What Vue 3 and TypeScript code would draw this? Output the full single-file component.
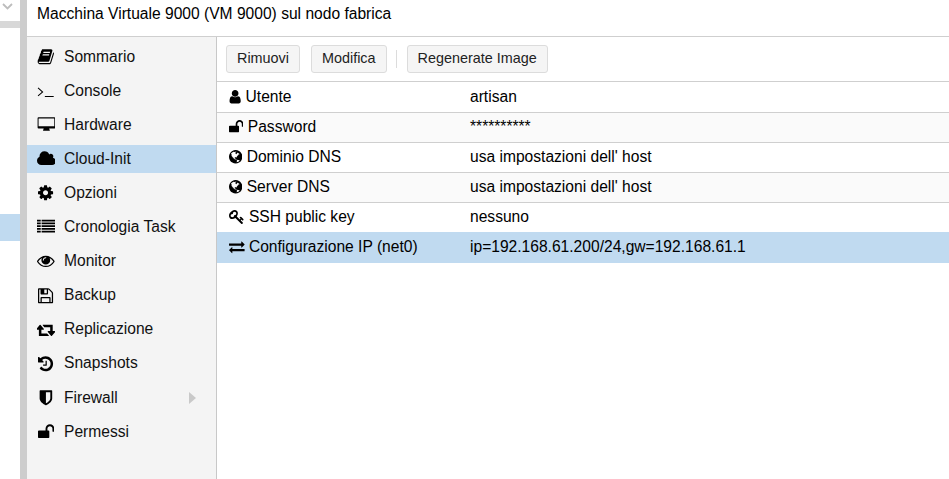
<script setup lang="ts">
const P: Record<string, { x: number; w: number; d: string }> = {
  book: { x: 0, w: 1792, d: 'M1703 478q40 57 18 129l-275 906q-19 64-76.5 107.5t-122.5 43.5h-923q-77 0-148.5-53.5t-99.5-131.5q-24-67-2-127 0-4 3-27t4-37q1-8-3-21.5t-3-19.5q2-11 8-21t16.5-23.5 16.5-23.5q23-38 45-91.5t30-91.5q3-10 .5-30t-.5-28q3-11 17-28t17-23q21-36 42-92t25-90q1-9-2.5-32t.5-28q4-13 22-30.5t22-22.5q19-26 42.5-84.5t27.5-96.5q1-8-3-25.5t-2-26.5q2-8 9-18t18-23 17-21q8-12 16.5-30.5t15-35 16-36 19.5-32 26.5-23.5 36-11.5 47.5 5.5l-1 3q38-9 51-9h761q74 0 114 56t18 130l-274 906q-36 119-71.5 153.5t-128.5 34.5h-869q-27 0-38 15-11 16-1 43 24 70 144 70h923q29 0 56-15.5t35-41.5l300-987q7-22 5-57 38 15 59 43zm-1064 2q-4 13 2 22.5t20 9.5h608q13 0 25.5-9.5t16.5-22.5l21-64q4-13-2-22.5t-20-9.5h-608q-13 0-25.5 9.5t-16.5 22.5zm-83 256q-4 13 2 22.5t20 9.5h608q13 0 25.5-9.5t16.5-22.5l21-64q4-13-2-22.5t-20-9.5h-608q-13 0-25.5 9.5t-16.5 22.5z' },
  terminal: { x: 0, w: 1792, d: 'M140 550l-70 76 420 380-420 380 70 76 510-456zM800 1430h900v110H800z' },
  desktop: { x: 0, w: 1920, d: 'M160 128h1600q100 0 100 100v940q0 100-100 100h-520q0 70 60 150 10 20 0 50t-50 32H670q-40-2-50-32t0-50q60-80 60-150H160q-100 0-100-100V228q0-100 100-100zm16 128q-16 0-16 16v760q0 16 16 16h1568q16 0 16-16V272q0-16-16-16z' },
  cloud: { x: 0, w: 1920, d: 'M1920 1152q0 159-112.5 271.5t-271.5 112.5h-1088q-185 0-316.5-131.5t-131.5-316.5q0-132 71-241.5t187-163.5q-2-28-2-43 0-212 150-362t362-150q158 0 286.5 88t187.5 230q70-62 166-62 106 0 181 75t75 181q0 75-41 138 129 30 213 134.5t84 239.5z' },
  cog: { x: 128, w: 1536, d: 'M1152 896q0-106-75-181t-181-75-181 75-75 181 75 181 181 75 181-75 75-181zm512-109v222q0 12-8 23t-20 13l-185 28q-19 54-39 91 35 50 107 138 10 12 10 25t-9 23q-27 37-99 108t-94 71q-12 0-26-9l-138-108q-44 23-91 38-16 136-29 186-7 28-36 28h-222q-14 0-24.5-8.5t-11.5-21.5l-28-184q-49-16-90-37l-141 107q-10 9-25 9-14 0-25-11-126-114-165-168-7-10-7-23 0-12 8-23 15-21 51-66.5t54-70.5q-27-50-41-99l-183-27q-13-2-21-12.5t-8-23.5v-222q0-12 8-23t19-13l186-28q14-46 39-92-40-57-107-138-10-12-10-24 0-10 9-23 26-36 98.5-107.5t94.5-71.5q13 0 26 10l138 107q44-23 91-38 16-136 29-186 7-28 36-28h222q14 0 24.5 8.5t11.5 21.5l28 184q49 16 90 37l142-107q9-9 24-9 13 0 25 10 129 119 165 170 7 8 7 22 0 12-8 23-15 21-51 66.5t-54 70.5q26 50 41 98l183 28q13 2 21 12.5t8 23.5z' },
  list: { x: 0, w: 1920, d: 'M0 170h380v185H0zm470 0h1450v185H470zM0 450h380v185H0zm470 0h1450v185H470zM0 730h380v185H0zm470 0h1450v185H470zM0 1010h380v185H0zm470 0h1450v185H470zM0 1290h380v185H0zm470 0h1450v185H470z' },
  eye: { x: 0, w: 1792, d: 'M1664 960q-152-236-381-353 61 104 61 225 0 185-131.5 316.5t-316.5 131.5-316.5-131.5-131.5-316.5q0-121 61-225-229 117-381 353 133 205 333.5 326.5t434.5 121.5 434.5-121.5 333.5-326.5zm-720-384q0-20-14-34t-34-14q-125 0-214.5 89.5t-89.5 214.5q0 20 14 34t34 14 34-14 14-34q0-86 61-147t147-61q20 0 34-14t14-34zm848 384q0 34-20 69-140 230-376.5 368.5t-499.5 138.5-499.5-139-376.5-368q-20-35-20-69t20-69q140-229 376.5-368t499.5-139 499.5 139 376.5 368q20 35 20 69z' },
  save: { x: 128, w: 1536, d: 'M512 1536h768v-384h-768v384zm896 0h128v-896q0-14-10-38.5t-20-34.5l-281-281q-10-10-34-20t-39-10v416q0 40-28 68t-68 28h-576q-40 0-68-28t-28-68v-416h-128v1280h128v-416q0-40 28-68t68-28h832q40 0 68 28t28 68v416zm-384-928v-320q0-13-9.5-22.5t-22.5-9.5h-192q-13 0-22.5 9.5t-9.5 22.5v320q0 13 9.5 22.5t22.5 9.5h192q13 0 22.5-9.5t9.5-22.5zm640 32v928q0 40-28 68t-68 28h-1344q-40 0-68-28t-28-68v-1344q0-40 28-68t68-28h928q40 0 88 20t76 48l280 280q28 28 48 76t20 88z' },
  retweet: { x: 0, w: 1920, d: 'M1216 1504q0 13-9.5 22.5t-22.5 9.5h-960q-8 0-13.5-2t-9-7-5.5-8-3-11.5-1-11.5v-600h-192q-26 0-45-19t-19-45q0-24 15-41l320-384q19-22 49-22t49 22l320 384q15 17 15 41 0 26-19 45t-45 19h-192v384h576q16 0 25 11l160 192q7 10 7 21zm640-416q0 24-15 41l-320 384q-20 23-49 23t-49-23l-320-384q-15-17-15-41 0-26 19-45t45-19h192v-384h-576q-16 0-25-12l-160-192q-7-9-7-20 0-13 9.5-22.5t22.5-9.5h960q8 0 13.5 2t9 7 5.5 8 3 11.5 1 11.5v600h192q26 0 45 19t19 45z' },
  history: { x: 128, w: 1536, d: 'M1664 896q0 156-61 298t-164 245-245 164-298 61q-172 0-327-72.5t-264-204.5q-7-10-6.5-22.5t8.5-20.5l137-138q10-9 25-9 16 2 23 12 73 95 179 147t225 52q104 0 198.5-40.5t163.5-109.5 109.5-163.5 40.5-198.5-40.5-198.5-109.5-163.5-163.5-109.5-198.5-40.5q-98 0-188 35.5t-160 101.5l137 138q31 30 14 69-17 40-59 40h-448q-26 0-45-19t-19-45v-448q0-42 40-59 39-17 69 14l130 129q107-101 244.5-156.5t284.5-55.5q156 0 298 61t245 164 164 245 61 298zm-640-288v448q0 14-9 23t-23 9h-320q-14 0-23-9t-9-23v-64q0-14 9-23t23-9h224v-352q0-14 9-23t23-9h64q14 0 23 9t9 23z' },
  shield: { x: 192, w: 1408, d: 'M1344 960v-640h-448v1137q119-63 213-137 235-184 235-360zm192-768v768q0 86-33.5 170.5t-83 150-118 127.5-126.5 103-121 77.5-89.5 49.5-42.5 20q-12 6-26 6t-26-6q-16-7-42.5-20t-89.5-49.5-121-77.5-126.5-103-118-127.5-83-150-33.5-170.5v-768q0-26 19-45t45-19h1152q26 0 45 19t19 45z' },
  unlock: { x: 64, w: 1664, d: 'M1728 576v256q0 26-19 45t-45 19h-64q-26 0-45-19t-19-45v-256q0-106-75-181t-181-75-181 75-75 181v192h96q40 0 68 28t28 68v576q0 40-28 68t-68 28h-960q-40 0-68-28t-28-68v-576q0-40 28-68t68-28h672v-192q0-185 131.5-316.5t316.5-131.5 316.5 131.5 131.5 316.5z' },
  user: { x: 192, w: 1408, d: 'M1536 1399q0 109-62.5 187t-150.5 78h-854q-88 0-150.5-78t-62.5-187q0-85 8.5-160.5t31.5-152 58.5-131 94-89 134.5-34.5q131 128 313 128t313-128q76 0 134.5 34.5t94 89 58.5 131 31.5 152 8.5 160.5zm-256-887q0 159-112.5 271.5t-271.5 112.5-271.5-112.5-112.5-271.5 112.5-271.5 271.5-112.5 271.5 112.5 112.5 271.5z' },
  globe: { x: 128, w: 1536, d: 'M896 128q209 0 385.5 103t279.5 279.5 103 385.5-103 385.5-279.5 279.5-385.5 103-385.5-103-279.5-279.5-103-385.5 103-385.5 279.5-279.5 385.5-103zm274 521q-2 1-9.5 9.5t-13.5 9.5q2 0 4.5-5t5-11 3.5-7q6-7 22-15 14-6 52-12 34-8 51 11-2-2 9.5-13t14.5-12q3-2 15-4.5t15-7.5l2-22q-12 1-17.5-7t-6.5-21q0 2-6 8 0-7-4.5-8t-11.5 1-9 1q-10-3-15-7.5t-8-16.5-4-15q-2-5-9.5-11t-9.5-10q-1-2-2.5-5.5t-3-6.5-4-5.5-5.5-2.5-7 5-7.5 10-4.5 5q-3-2-6-1.5t-4.5 1-4.5 3-5 3.5q-3 2-8.5 3t-8.5 2q15-5-1-11-10-4-16-3 9-4 7.5-12t-8.5-14h5q-1-4-8.5-8.5t-17.5-8.5-13-6q-8-5-34-9.5t-33-.5q-5 6-4.5 10.5t4 14 3.5 12.5q1 6-5.5 13t-6.5 12q0 7 14 15.5t10 21.5q-3 8-16 16t-16 12q-5 8-1.5 18.5t10.5 16.5q2 2 1.5 4t-3.5 4.5-5.5 4-6.5 3.5l-3 2q-11 5-20.5-6t-13.5-26q-7-25-16-30-23-8-29 1-5-13-41-26-25-9-58-4 6-1 0-15-7-15-19-12 3-6 4-17.5t1-13.5q3-13 12-23 1-1 7-8.5t9.5-13.5.5-6q35 4 50-11 5-5 11.5-17t10.5-17q9-6 14-5.5t14.5 5.5 14.5 5q14 1 15.5-11t-7.5-20q12 1 3-17-4-7-8-9-12-4-27 5-8 4 2 8-1-1-9.5 10.5t-16.5 17.5-16-5q-1-1-5.5-13.5t-9.5-13.5q-8 0-16 15 3-8-11-15t-24-8q19-12-8-27-7-4-20.5-5t-19.5 4q-5 7-5.5 11.5t5 8 10.5 5.5 11.5 4 8.5 3q14 10 8 14-2 1-8.5 3.5t-11.5 4.5-6 4q-3 4 0 14t-2 14q-5-5-9-17.5t-7-16.5q7 9-25 6l-10-1q-4 0-16 2t-20.5 1-13.5-8q-4-8 0-20 1-4 4-2-4-3-11-9.5t-10-8.5q-46 15-94 41 6 1 12-1 5-2 13-6.5t10-5.5q34-14 42-7l5-5q14 16 20 25-7-4-30-1-20 6-22 12 7 12 5 18-4-3-11.5-10t-14.5-11-15-5q-16 0-22 1-146 80-235 222 7 7 12 8 4 1 5 9t2.5 11 11.5-3q9 8 3 19 1-1 44 27 19 17 21 21 3 11-10 18-1-2-9-9t-9-4q-3 5 .5 18.5t10.5 12.5q-7 0-9.5 16t-2.5 35.5-1 23.5l2 1q-3 12 5.5 34.5t21.5 19.5q-13 3 20 43 6 8 8 9 3 2 12 7.5t15 10 10 10.5q4 5 10 22.5t14 23.5q-2 6 9.5 20t10.5 23q-1 0-2.5 1t-2.5 1q3 7 15.5 14t15.5 13q1 3 2 10t3 11 8 2q2-20-24-62-15-25-17-29-3-5-5.5-15.5t-4.5-14.5q2 0 6 1.5t8.5 3.5 7.5 4 2 3q-3 7 2 17.5t12 18.5 17 19 12 13q6 6 14 19.5t0 13.5q9 0 20 10.5t17 19.5q5 8 8 26t5 24q2 7 8.5 13.5t12.5 9.5l16 8 13 7q5 2 18.5 10.5t21.5 11.5q10 4 16 4t14.5-2.5 13.5-3.5q15-2 29 15t21 21q36 19 55 11-2 1 .5 7.5t8 15.5 9 14.5 5.5 8.5q5 6 18 15t18 15q6-4 7-9-3 8 7 20t18 10q14-3 14-32-31 15-49-18 0-1-2.5-5.5t-4-8.5-2.5-8.5 0-7.5 5-3q9 0 10-3.5t-2-12.5-4-13q-1-8-11-20t-12-15q-5 9-16 8t-16-9q0 1-1.5 5.5t-1.5 6.5q-13 0-15-1 1-3 2.5-17.5t3.5-22.5q1-4 5.5-12t7.5-14.5 4-12.5-4.5-9.5-17.5-2.5q-19 1-26 20-1 3-3 10.5t-5 11.5-9 7q-7 3-24 2t-24-5q-13-8-22.5-29t-9.5-37q0-10 2.5-26.5t3-25-5.5-24.5q3-2 9-9.5t10-10.5q2-1 4.5-1.5t4.5 0 4-1.5 3-6q-1-1-4-3-3-3-4-3 7 3 28.5-1.5t27.5 1.5q15 11 22-2 0-1-2.5-9.5t-.5-13.5q5 27 29 9 3 3 15.5 5t17.5 5q3 2 7 5.5t5.5 4.5 5-.5 8.5-6.5q10 14 12 24 11 40 19 44 7 3 11 2t4.5-9.5 0-14-1.5-12.5l-1-8v-18l-1-8q-15-3-18.5-12t1.5-18.5 15-18.5q1-1 8-3.5t15.5-6.5 12.5-8q21-19 15-35 7 0 11-9-1 0-5-3t-7.5-5-4.5-2q9-5 2-16 5-3 7.5-11t7.5-10q9 12 21 2 8-8 1-16 5-7 20.5-10.5t18.5-9.5q7 2 8-2t1-12 3-12q4-5 15-9t13-5l17-11q3-4 0-4 18 2 31-11 10-11-6-20 3-6-3-9.5t-15-5.5q3-1 11.5-.5t10.5-1.5q15-10-7-16-17-5-43 12zm-163 877q206-36 351-189-3-3-12.5-4.5t-12.5-3.5q-18-7-24-8 1-7-2.5-13t-8-9-12.5-8-11-7q-2-2-7-6t-7-5.5-7.5-4.5-8.5-2-10 1l-3 1q-3 1-5.5 2.5t-5.5 3-4 3 0 2.5q-21-17-36-22-5-1-11-5.5t-10.5-7-10-1.5-11.5 7q-5 5-6 15t-2 13q-7-5 0-17.5t2-18.5q-3-6-10.5-4.5t-12 4.5-11.5 8.5-9 6.5-8.5 5.5-8.5 7.5q-3 4-6 12t-5 11q-2-4-11.5-6.5t-9.5-5.5q2 10 4 35t5 38q7 31-12 48-27 25-29 40-4 22 12 26 0 7-8 20.5t-7 21.5q0 6 2 16z' },
  key: { x: 0, w: 1792, d: 'M832 512q0-80-56-136t-136-56-136 56-56 136q0 42 19 83-41-19-83-19-80 0-136 56t-56 136 56 136 136 56 136-56 56-136q0-42-19-83 41 19 83 19 80 0 136-56t56-136zm851 704q0 17-49 66t-66 49q-9 0-28.5-16t-36.5-33-38.5-40-24.5-26l-96 96 220 220q28 28 28 68 0 42-39 81t-81 39q-40 0-68-28l-671-671q-176 131-365 131-163 0-265.5-102.5t-102.5-265.5q0-160 95-313t248-248 313-95q163 0 265.5 102.5t102.5 265.5q0 189-131 365l355 355 96-96q-3-3-26-24.5t-40-38.5-33-36.5-16-28.5q0-17 49-66t66-49q13 0 23 10 6 6 46 44.5t82 79.5 86.5 86 73 78 28.5 41z' },
  exchange: { x: 0, w: 1792, d: 'M1792 1184v192q0 13-9.5 22.5t-22.5 9.5h-1376v192q0 13-9.5 22.5t-22.5 9.5q-12 0-24-10l-319-320q-9-9-9-22 0-14 9-23l320-320q9-9 23-9 13 0 22.5 9.5t9.5 22.5v192h1376q13 0 22.5 9.5t9.5 22.5zm0-544q0 14-9 23l-320 320q-9 9-23 9-13 0-22.5-9.5t-9.5-22.5v-192h-1376q-13 0-22.5-9.5t-9.5-22.5v-192q0-13 9.5-22.5t22.5-9.5h1376v-192q0-14 9-23t23-9q12 0 24 10l319 319q9 9 9 23z' },
}

const vb = (n: string) => `${P[n].x} 0 ${P[n].w} 1792`
const NAV_SIZE = 17.6
const ROW_SIZE = 15.6
const w = (n: string, s: number) => (P[n].w * s) / 1792

const nav = [
  { label: 'Sommario', icon: 'book' },
  { label: 'Console', icon: 'terminal' },
  { label: 'Hardware', icon: 'desktop' },
  { label: 'Cloud-Init', icon: 'cloud', active: true },
  { label: 'Opzioni', icon: 'cog' },
  { label: 'Cronologia Task', icon: 'list' },
  { label: 'Monitor', icon: 'eye' },
  { label: 'Backup', icon: 'save' },
  { label: 'Replicazione', icon: 'retweet' },
  { label: 'Snapshots', icon: 'history' },
  { label: 'Firewall', icon: 'shield', arrow: true },
  { label: 'Permessi', icon: 'unlock' },
]

const rows = [
  { label: 'Utente', icon: 'user', value: 'artisan' },
  { label: 'Password', icon: 'unlock', value: '**********' },
  { label: 'Dominio DNS', icon: 'globe', value: "usa impostazioni dell' host" },
  { label: 'Server DNS', icon: 'globe', value: "usa impostazioni dell' host" },
  { label: 'SSH public key', icon: 'key', value: 'nessuno' },
  { label: 'Configurazione IP (net0)', icon: 'exchange', value: 'ip=192.168.61.200/24,gw=192.168.61.1', active: true },
]
</script>

<template>
  <div class="page">
    <aside class="tree">
      <div class="tree-head">
        <svg width="11" height="8" viewBox="0 0 11 8"><path d="M1 1l4.5 4.5L10 1" fill="none" stroke="#bdbdbd" stroke-width="1.8" /></svg>
      </div>
      <div class="tree-body">
        <div class="tree-sel"></div>
      </div>
    </aside>
    <div class="splitter"></div>
    <main class="panel">
      <header class="title">Macchina Virtuale 9000 (VM 9000) sul nodo fabrica</header>
      <div class="content">
        <nav class="nav">
          <div v-for="n in nav" :key="n.label" class="nav-item" :class="{ active: n.active }">
            <span class="nav-icon">
              <svg :width="w(n.icon, NAV_SIZE)" :height="NAV_SIZE" :viewBox="vb(n.icon)"><path :d="P[n.icon].d" /></svg>
            </span>
            <span class="nav-label">{{ n.label }}</span>
            <svg v-if="n.arrow" class="arrow" width="7" height="12" viewBox="0 0 7 12"><path d="M0 0l7 6-7 6z" fill="#c9c9c9" /></svg>
          </div>
        </nav>
        <section class="main">
          <div class="toolbar">
            <button class="btn">Rimuovi</button>
            <button class="btn">Modifica</button>
            <span class="sep"></span>
            <button class="btn">Regenerate Image</button>
          </div>
          <div class="grid">
            <div v-for="r in rows" :key="r.label" class="row" :class="{ active: r.active }">
              <div class="cell-key">
                <svg class="row-icon" :width="w(r.icon, ROW_SIZE)" :height="ROW_SIZE" :viewBox="vb(r.icon)"><path :d="P[r.icon].d" /></svg>
                <span>{{ r.label }}</span>
              </div>
              <div class="cell-val">{{ r.value }}</div>
            </div>
          </div>
        </section>
      </div>
    </main>
  </div>
</template>

<style scoped>
.page {
  display: flex;
  width: 949px;
  height: 479px;
  overflow: hidden;
  background: #fff;
  color: #000;
  font-family: "Liberation Sans", Arial, sans-serif;
  font-size: 15.6px;
}
.tree { width: 20px; flex: none; display: flex; flex-direction: column; }
.tree-head { height: 21px; display: flex; align-items: flex-start; padding: 3px 0 0 2px; box-sizing: border-box; }
.tree-body { flex: 1; border-top: 7px solid #d8d8d8; padding-top: 186px; }
.tree-sel { height: 27px; background: #c0daf0; }
.splitter { width: 7px; flex: none; background: #cdcdcd; }
.panel { flex: 1; min-width: 0; display: flex; flex-direction: column; }
.title { height: 37px; box-sizing: border-box; padding: 5px 0 0 10px; line-height: 18px; border-bottom: 1px solid #cfcfcf; }
.content { flex: 1; display: flex; min-height: 0; }
.nav { width: 190px; flex: none; box-sizing: border-box; background: #f4f4f4; border-right: 1px solid #c8c8c8; padding-top: 5.77px; display: flex; flex-direction: column; gap: 6.09px; }
.nav-item { height: 28px; flex: none; display: flex; align-items: center; position: relative; padding-left: 9px; }
.nav-item.active { background: #c0daf0; }
.nav-icon { width: 20px; height: 20px; flex: none; display: flex; align-items: center; justify-content: center; }
.nav-icon svg { fill: #000; display: block; }
.nav-label { margin-left: 8px; padding-top: 0; line-height: 18px; color: #111; transform: translateY(-0.2px); }
.arrow { position: absolute; left: 162px; top: 8px; }
.main { flex: 1; min-width: 0; display: flex; flex-direction: column; }
.toolbar { height: 45px; box-sizing: border-box; display: flex; align-items: flex-start; padding: 8px 0 0 9px; border-bottom: 1px solid #cfcfcf; }
.btn { height: 28px; box-sizing: border-box; margin-right: 11px; padding: 0 10px 2px; border: 1px solid #dcdcdc; border-radius: 3px; background: #f5f5f5; font: inherit; font-size: 14.4px; color: #222; }
.sep { width: 1px; height: 18px; background: #dcdcdc; margin: 5px 10px 0 -2px; }
.grid { display: flex; flex-direction: column; padding-top: 1px; }
.row { height: 30px; box-sizing: border-box; display: flex; align-items: center; padding-bottom: 1px; border-bottom: 1px solid #cfcfcf; }
.row:nth-child(even) { background: #fafafa; }
.row:nth-child(5) { border-bottom-color: #c0daf0; }
.row.active { background: #c0daf0; border-bottom-color: #c0daf0; }
.cell-key { width: 253px; flex: none; display: flex; align-items: center; padding-left: 12px; box-sizing: border-box; line-height: 18px; }
.row-icon { flex: none; margin-right: 4.3px; fill: #000; display: block; }
.cell-val { line-height: 18px; }
</style>
